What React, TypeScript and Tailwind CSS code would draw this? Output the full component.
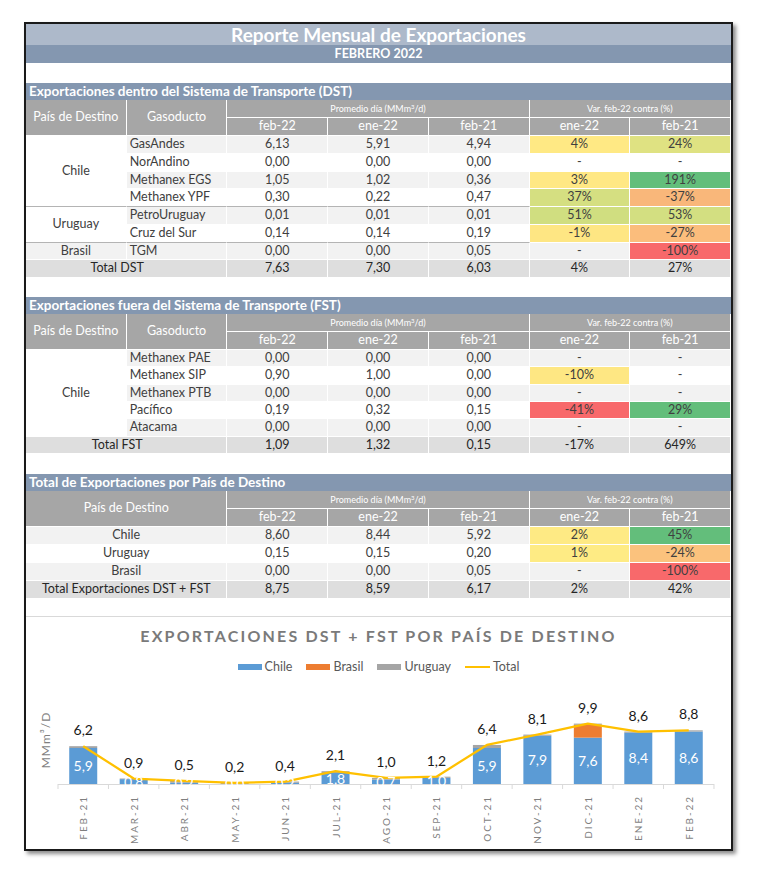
import React from "react";

type Pct = [string, string | null];

const C = "flex items-center justify-center border-r border-b border-white";

function Hdr({ children, cls = "" }: { children: React.ReactNode; cls?: string }) {
  return <div className={`${C} bg-[#a6a6a6] text-white ${cls}`}>{children}</div>;
}

function SectionBar({ title }: { title: string }) {
  return (
    <div className="h-[17px] bg-[#8497b0] flex items-center pl-[3px] text-white font-bold text-[13.5px] leading-none">
      {title}
    </div>
  );
}

function HeaderRows({ merged }: { merged: boolean }) {
  return (
    <>
      {merged ? (
        <Hdr cls="col-span-2 row-span-2 text-[12.5px]">País de Destino</Hdr>
      ) : (
        <>
          <Hdr cls="row-span-2 text-[12.5px]">País de Destino</Hdr>
          <Hdr cls="row-span-2 text-[12.5px]">Gasoducto</Hdr>
        </>
      )}
      <Hdr cls="col-span-3 text-[9px]">
        <span>
          Promedio día (MMm<sup className="text-[6px]">3</sup>/d)
        </span>
      </Hdr>
      <Hdr cls="col-span-2 text-[9px]">Var. feb-22 contra (%)</Hdr>
      {["feb-22", "ene-22", "feb-21", "ene-22", "feb-21"].map((t, i) => (
        <Hdr key={i} cls="text-[12.5px]">
          {t}
        </Hdr>
      ))}
    </>
  );
}

function DataCells({
  vals,
  pct,
  bg,
  sepCls,
}: {
  vals: string[];
  pct: Pct[];
  bg: string;
  sepCls: string;
}) {
  return (
    <>
      {vals.map((v, i) => (
        <div key={i} className={`${C} ${bg} ${sepCls}`}>
          {v}
        </div>
      ))}
      {pct.map(([t, col], i) => (
        <div
          key={"p" + i}
          className={`${C} ${col ? "" : bg}`}
          style={col ? { backgroundColor: col } : undefined}
        >
          {t}
        </div>
      ))}
    </>
  );
}

type Row = { g: string; v: string[]; p: Pct[] };

const dst: Row[] = [
  { g: "GasAndes", v: ["6,13", "5,91", "4,94"], p: [["4%", "#ffe984"], ["24%", "#dfe282"]] },
  { g: "NorAndino", v: ["0,00", "0,00", "0,00"], p: [["-", null], ["-", null]] },
  { g: "Methanex EGS", v: ["1,05", "1,02", "0,36"], p: [["3%", "#ffe884"], ["191%", "#63be7b"]] },
  { g: "Methanex YPF", v: ["0,30", "0,22", "0,47"], p: [["37%", "#d5df81"], ["-37%", "#f9b77a"]] },
  { g: "PetroUruguay", v: ["0,01", "0,01", "0,01"], p: [["51%", "#d0de80"], ["53%", "#d3df81"]] },
  { g: "Cruz del Sur", v: ["0,14", "0,14", "0,19"], p: [["-1%", "#fee683"], ["-27%", "#fbbd7c"]] },
  { g: "TGM", v: ["0,00", "0,00", "0,05"], p: [["-", null], ["-100%", "#f8696b"]] },
];

const fst: Row[] = [
  { g: "Methanex PAE", v: ["0,00", "0,00", "0,00"], p: [["-", null], ["-", null]] },
  { g: "Methanex SIP", v: ["0,90", "1,00", "0,00"], p: [["-10%", "#fee783"], ["-", null]] },
  { g: "Methanex PTB", v: ["0,00", "0,00", "0,00"], p: [["-", null], ["-", null]] },
  { g: "Pacífico", v: ["0,19", "0,32", "0,15"], p: [["-41%", "#f8696b"], ["29%", "#63be7b"]] },
  { g: "Atacama", v: ["0,00", "0,00", "0,00"], p: [["-", null], ["-", null]] },
];

const tot: Row[] = [
  { g: "Chile", v: ["8,60", "8,44", "5,92"], p: [["2%", "#feea84"], ["45%", "#63be7b"]] },
  { g: "Uruguay", v: ["0,15", "0,15", "0,20"], p: [["1%", "#feeb84"], ["-24%", "#fbc27d"]] },
  { g: "Brasil", v: ["0,00", "0,00", "0,05"], p: [["-", null], ["-100%", "#f8696b"]] },
];

function TotalRow({ label, vals, labelCls = "" }: { label: string; vals: string[]; labelCls?: string }) {
  return (
    <>
      <div className={`${C} col-span-2 bg-[#dedede] text-[#262626] ${labelCls}`}>{label}</div>
      {vals.map((v, i) => (
        <div key={i} className={`${C} bg-[#dedede] text-[#262626]`}>
          {v}
        </div>
      ))}
    </>
  );
}

const cats = ["FEB-21", "MAR-21", "ABR-21", "MAY-21", "JUN-21", "JUL-21", "AGO-21", "SEP-21", "OCT-21", "NOV-21", "DIC-21", "ENE-22", "FEB-22"];
const cd = [
  { c: 5.9, b: 0, u: 0.3, t: 6.2 },
  { c: 0.8, b: 0, u: 0.1, t: 0.9 },
  { c: 0.2, b: 0, u: 0.3, t: 0.5 },
  { c: 0.0, b: 0, u: 0.2, t: 0.2 },
  { c: 0.2, b: 0, u: 0.2, t: 0.4 },
  { c: 1.8, b: 0, u: 0.3, t: 2.1 },
  { c: 0.7, b: 0, u: 0.3, t: 1.0 },
  { c: 1.0, b: 0, u: 0.2, t: 1.2 },
  { c: 5.9, b: 0, u: 0.5, t: 6.4 },
  { c: 7.9, b: 0, u: 0.2, t: 8.1 },
  { c: 7.6, b: 2.1, u: 0.2, t: 9.9 },
  { c: 8.4, b: 0, u: 0.2, t: 8.6 },
  { c: 8.6, b: 0, u: 0.2, t: 8.8 },
];

const fmt = (n: number) => n.toFixed(1).replace(".", ",");

function Chart() {
  const X0 = 32;
  const STEP = 50.46;
  const BASE = 99;
  const K = 6.1;
  const BW = 28;
  const cx = (i: number) => X0 + STEP * (i + 0.5);
  const pts = cd.map((d, i) => `${cx(i)},${BASE - d.t * K}`).join(" ");
  return (
    <svg width="705" height="163" className="block">
      <text
        transform="translate(24,55) rotate(-90)"
        textAnchor="middle"
        fontSize="12"
        fill="#7f7f7f"
        letterSpacing="1"
        fontFamily="Lato, sans-serif"
      >
        MMm³/D
      </text>
      <line x1={X0} x2={X0 + STEP * 13} y1={BASE + 0.5} y2={BASE + 0.5} stroke="#d9d9d9" />
      {Array.from({ length: 14 }).map((_, i) => (
        <line key={i} x1={X0 + STEP * i} x2={X0 + STEP * i} y1={BASE} y2={BASE + 5} stroke="#d9d9d9" />
      ))}
      {cd.map((d, i) => {
        const x = cx(i) - BW / 2;
        const hc = d.c * K;
        const hb = d.b * K;
        const hu = d.u * K;
        return (
          <g key={i}>
            <rect x={x} y={BASE - hc} width={BW} height={hc} fill="#5b9bd5" />
            {hb > 0 && <rect x={x} y={BASE - hc - hb} width={BW} height={hb} fill="#ed7d31" />}
            <rect x={x} y={BASE - hc - hb - hu} width={BW} height={hu} fill="#a5a5a5" />
          </g>
        );
      })}
      <polyline points={pts} fill="none" stroke="#ffc000" strokeWidth="2.25" strokeLinejoin="round" />
      {cd.map((d, i) => (
        <g key={i} fontFamily="Lato, sans-serif" fontSize="14" textAnchor="middle">
          <text x={cx(i)} y={BASE - d.c * K / 2 + 5} fill="#ffffff">
            {fmt(d.c)}
          </text>
          <text x={cx(i)} y={BASE - d.t * K - 11} fill="#1a1a1a">
            {fmt(d.t)}
          </text>
          <text
            transform={`translate(${cx(i)},110) rotate(-90)`}
            textAnchor="end"
            dominantBaseline="central"
            fontSize="10"
            letterSpacing="1.9"
            fill="#7f7f7f"
          >
            {cats[i]}
          </text>
        </g>
      ))}
    </svg>
  );
}

export default function App() {
  return (
    <div className="w-[757px] h-[887px] bg-white pt-[22px] pl-[24px] font-['Lato',sans-serif] text-[12.5px] text-[#404040] leading-none">
      <div className="w-[709px] border-2 border-[#1a1a1a] shadow-[3px_3px_4px_rgba(0,0,0,0.45)] bg-white">
        <div className="h-[21px] bg-[#adb9ca] flex items-center justify-center text-white font-bold text-[19px]">
          Reporte Mensual de Exportaciones
        </div>
        <div className="h-[18px] bg-[#8497b0] flex items-center justify-center text-white font-bold text-[12.5px]">
          FEBRERO 2022
        </div>
        <div className="h-[20px]" />

        {/* DST */}
        <SectionBar title="Exportaciones dentro del Sistema de Transporte (DST)" />
        <div className="grid grid-cols-7 grid-rows-[18px_18px_repeat(8,17.75px)]">
          <HeaderRows merged={false} />
          {dst.map((r, i) => {
            const bg = i % 2 === 0 ? "bg-[#f2f2f2]" : "bg-white";
            const sep = i === 3 || i === 5 ? "border-b-[#b4b4b4]" : "";
            return (
              <React.Fragment key={i}>
                {i === 0 && <div className={`${C} row-span-4 bg-white border-b-[#b4b4b4]`}>Chile</div>}
                {i === 4 && <div className={`${C} row-span-2 bg-white border-b-[#b4b4b4]`}>Uruguay</div>}
                {i === 6 && <div className={`${C} ${bg}`}>Brasil</div>}
                <div className={`${C} !justify-start pl-[3px] ${bg} ${sep}`}>{r.g}</div>
                <DataCells vals={r.v} pct={r.p} bg={bg} sepCls={sep} />
              </React.Fragment>
            );
          })}
          <TotalRow label="Total DST" vals={["7,63", "7,30", "6,03", "4%", "27%"]} labelCls="pr-[18px]" />
        </div>
        <div className="h-[19px]" />

        {/* FST */}
        <SectionBar title="Exportaciones fuera del Sistema de Transporte (FST)" />
        <div className="grid grid-cols-7 grid-rows-[18px_18px_repeat(6,17.33px)]">
          <HeaderRows merged={false} />
          {fst.map((r, i) => {
            const bg = i % 2 === 0 ? "bg-[#f2f2f2]" : "bg-white";
            return (
              <React.Fragment key={i}>
                {i === 0 && <div className={`${C} row-span-5 bg-white`}>Chile</div>}
                <div className={`${C} !justify-start pl-[3px] ${bg}`}>{r.g}</div>
                <DataCells vals={r.v} pct={r.p} bg={bg} sepCls="" />
              </React.Fragment>
            );
          })}
          <TotalRow label="Total FST" vals={["1,09", "1,32", "0,15", "-17%", "649%"]} labelCls="pr-[18px]" />
        </div>
        <div className="h-[20px]" />

        {/* Total */}
        <SectionBar title="Total de Exportaciones por País de Destino" />
        <div className="grid grid-cols-7 grid-rows-[18px_18px_repeat(4,18px)]">
          <HeaderRows merged={true} />
          {tot.map((r, i) => {
            const bg = i % 2 === 0 ? "bg-[#f2f2f2]" : "bg-white";
            return (
              <React.Fragment key={i}>
                <div className={`${C} col-span-2 ${bg}`}>{r.g}</div>
                <DataCells vals={r.v} pct={r.p} bg={bg} sepCls="" />
              </React.Fragment>
            );
          })}
          <TotalRow label="Total Exportaciones DST + FST" vals={["8,75", "8,59", "6,17", "2%", "42%"]} />
        </div>
        <div className="h-[17px]" />

        {/* Chart */}
        <div className="h-[233px] border-t border-[#d9d9d9] flex flex-col items-center">
          <div className="mt-[11px] text-[16px] font-bold tracking-[2.2px] text-[#7a7a7a]">
            EXPORTACIONES DST + FST POR PAÍS DE DESTINO
          </div>
          <div className="mt-[17px] flex items-center gap-[14px] text-[12.5px] text-[#595959]">
            <div className="flex items-center gap-[3px]">
              <span className="w-[24px] h-[6px] bg-[#5b9bd5]" />
              Chile
            </div>
            <div className="flex items-center gap-[3px]">
              <span className="w-[24px] h-[6px] bg-[#ed7d31]" />
              Brasil
            </div>
            <div className="flex items-center gap-[3px]">
              <span className="w-[24px] h-[6px] bg-[#a5a5a5]" />
              Uruguay
            </div>
            <div className="flex items-center gap-[3px]">
              <span className="w-[25px] h-[2px] bg-[#ffc000]" />
              Total
            </div>
          </div>
          <div className="mt-[12px] self-start">
            <Chart />
          </div>
        </div>
      </div>
    </div>
  );
}
